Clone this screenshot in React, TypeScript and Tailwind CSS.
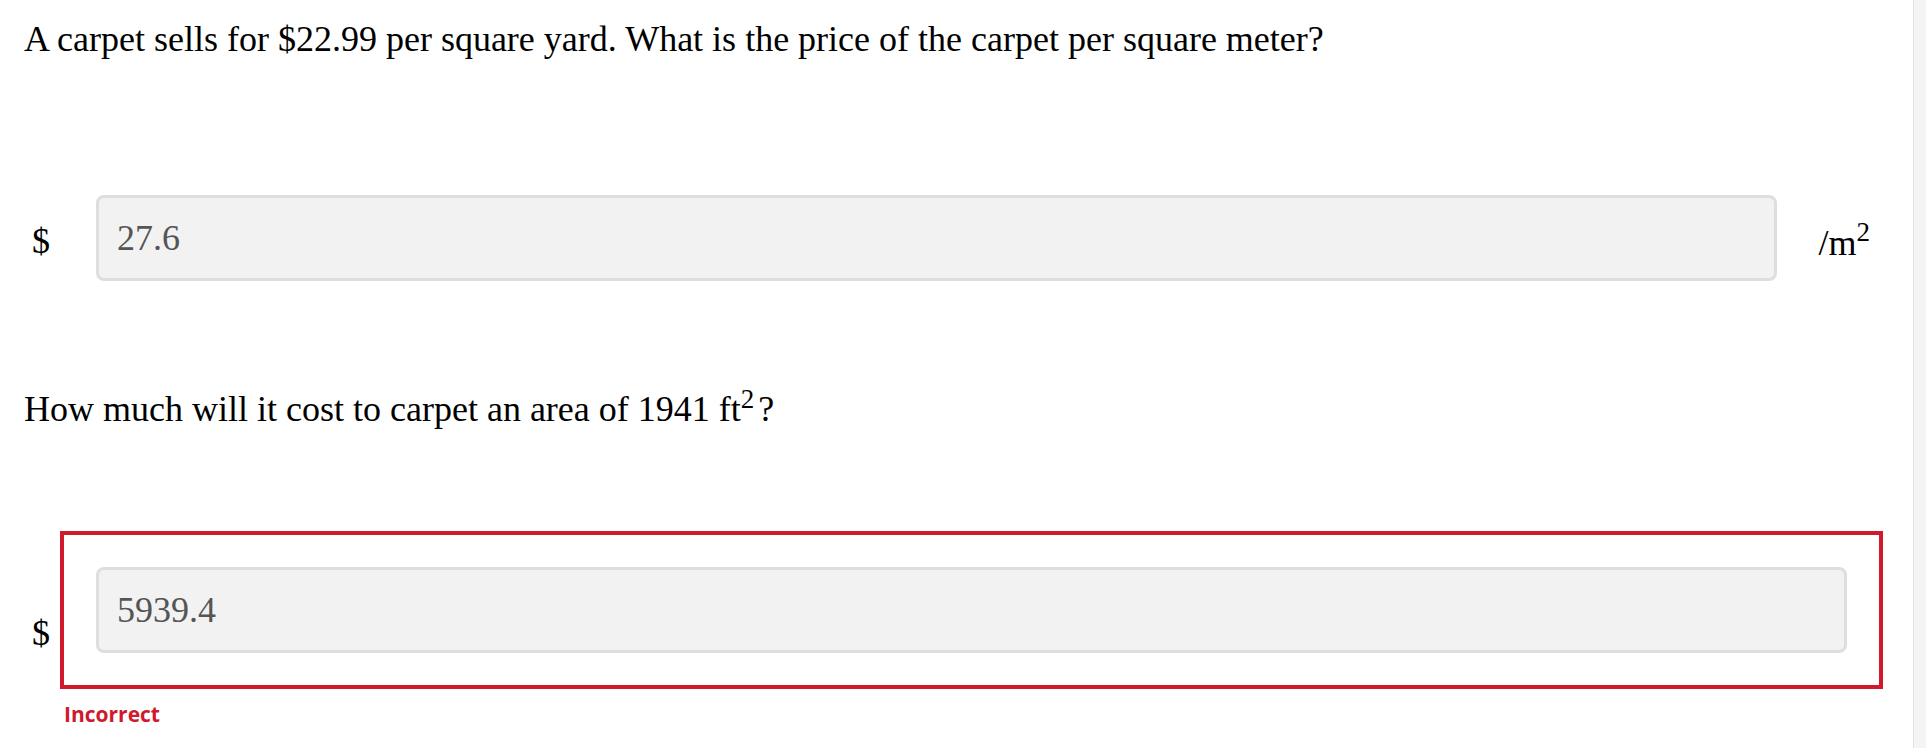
import React from 'react';

const serif = "font-['Liberation_Serif','Times_New_Roman',serif]";

// answer box: transparent frame in the normal state, red frame when graded wrong
const AnswerBox = ({ value, wrong }: { value: string; wrong?: boolean }) => (
  <div
    className={
      'flex-1 border-[4px] p-[32px] ' +
      (wrong ? 'border-[#d2182b]' : 'border-transparent')
    }
  >
    <input
      type="text"
      readOnly
      value={value}
      className={
        serif +
        ' block w-full h-[86px] rounded-[8px] border-[3px] border-[#dedede] bg-[#f2f2f2] pl-[18px] text-[36px] leading-[1.15] text-[#555555] outline-none'
      }
    />
  </div>
);

export default function App() {
  return (
    <div className="flex min-h-screen bg-white">
      <main className={serif + ' flex-1 pl-[24px] pr-[30px] pt-[19px] text-black'}>
        {/* Part 1 */}
        <p className="text-[36px] leading-[1.15]">
          A carpet sells for $22.99 per square yard. What is the price of the carpet per square meter?
        </p>

        <div className="mt-[99px] flex items-center">
          <span className="ml-[8px] mr-[10px] mt-[6px] text-[36px] leading-[1.15]">$</span>
          <AnswerBox value="27.6" />
          <span className="ml-[5px] mr-[13px] mt-[10px] text-[36px] leading-[1.15]">
            /m<sup>2</sup>
          </span>
        </div>

        {/* Part 2 */}
        <p className="mt-[72px] text-[36px] leading-[1.15]">
          How much will it cost to carpet an area of 1941 ft<sup>2</sup>
          <span className="ml-[4px]">?</span>
        </p>

        <div className="mt-[100px] flex items-center">
          <span className="ml-[8px] mr-[10px] mt-[6px] text-[36px] leading-[1.15]">$</span>
          <div className="flex flex-1 flex-col">
            <AnswerBox value="5939.4" wrong />
            <span className="mt-[10px] pl-[4px] font-['Open_Sans',sans-serif] text-[21px] font-bold text-[#d2182b]">
              Incorrect
            </span>
          </div>
        </div>
      </main>
      <aside className="w-[13px] shrink-0 border-l border-[#e2e2e2] bg-[#f4f4f4]" />
    </div>
  );
}
